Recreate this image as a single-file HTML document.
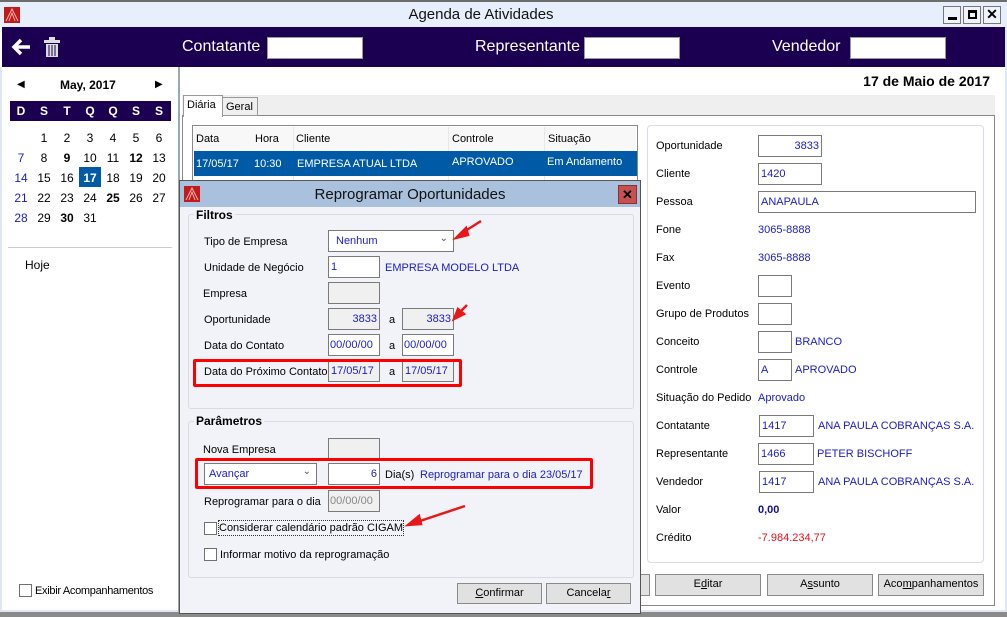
<!DOCTYPE html>
<html><head><meta charset="utf-8"><style>
*{margin:0;padding:0;box-sizing:border-box}
body{width:1007px;height:617px;overflow:hidden;background:#fff;font-family:"Liberation Sans",sans-serif;font-size:11px;color:#000;position:relative}
.a{position:absolute;white-space:nowrap}
.box{position:absolute;border:1px solid #7a7a7a;background:#fff;color:#1c1cc0;font-size:11px;padding:3px 2px;line-height:14px}
.gr{background:#f0f0f0}
.r{text-align:right}
.bl{color:#1c1cc0}
.btn{position:absolute;border:1px solid #8a8a8a;background:#e1e1e1;text-align:center;line-height:19px;font-size:11px}
.cb{position:absolute;width:13px;height:13px;border:1px solid #707070;background:#fff}
.lb{position:absolute;white-space:nowrap;line-height:14px}
</style></head><body>
<div class="a" style="left:0;top:0;width:1007px;height:2px;background:#6d6d6d"></div>
<div class="a" style="left:0;top:2px;width:1007px;height:25px;background:#e8effc"></div>
<svg class="a" style="left:4px;top:7px" width="16" height="16"><rect width="16" height="16" fill="#c21a1a"/><path d="M2 14 L8 2 L14 14 M5 14 L8 6 L11 14" stroke="#f5b0b0" stroke-width="1" fill="none"/></svg>
<div class="a" style="left:0;top:6px;width:962px;text-align:center;font-size:15px;color:#111">Agenda de Atividades</div>
<div class="a" style="left:943px;top:6px;width:18px;height:18px;border:1px solid #777;background:#eef2fb"><div class="a" style="left:4px;top:10px;width:9px;height:3px;background:#000"></div></div>
<div class="a" style="left:963px;top:6px;width:18px;height:18px;border:1px solid #777;background:#eef2fb"><div class="a" style="left:4px;top:3px;width:9px;height:9px;border:2px solid #000;border-top-width:3px"></div></div>
<div class="a" style="left:983px;top:6px;width:18px;height:18px;border:1px solid #777;background:#eef2fb;font-weight:bold;font-size:14px;text-align:center;line-height:15px">✕</div>
<div class="a" style="left:2px;top:27px;width:1003px;height:40px;background:#1b0052"></div>
<svg class="a" style="left:10px;top:37px" width="22" height="20"><path d="M11 3 L4 10 L11 17 M4 10 L20 10" stroke="#fff" stroke-width="3.5" fill="none"/></svg>
<svg class="a" style="left:43px;top:36px" width="18" height="22"><rect x="1" y="4" width="16" height="3" fill="#ddd"/><rect x="6" y="1" width="6" height="3" fill="#ddd"/><rect x="3" y="8" width="12" height="13" fill="#ddd"/><path d="M6 9V20M9 9V20M12 9V20" stroke="#1b0052" stroke-width="1"/></svg>
<div class="a" style="left:182px;top:38px;font-size:16px;color:#fff">Contatante</div>
<div class="a" style="left:267px;top:37px;width:96px;height:22px;background:#fff;border:1px solid #999"></div>
<div class="a" style="left:475px;top:38px;font-size:16px;color:#fff">Representante</div>
<div class="a" style="left:584px;top:37px;width:96px;height:22px;background:#fff;border:1px solid #999"></div>
<div class="a" style="left:772px;top:38px;font-size:16px;color:#fff">Vendedor</div>
<div class="a" style="left:850px;top:37px;width:96px;height:22px;background:#fff;border:1px solid #999"></div>
<div class="a" style="left:0;top:67px;width:2px;height:550px;background:#dfe6f4"></div>
<div class="a" style="left:1005px;top:27px;width:2px;height:590px;background:#dfe6f4"></div>
<div class="a" style="left:0;top:612px;width:1007px;height:5px;background:#8a8a8a"></div>
<div class="a" style="left:0;top:610px;width:1007px;height:2px;background:#dfe6f4"></div>

<div class="a" style="left:17px;top:79px;font-size:10px">◀</div>
<div class="a" style="left:60px;top:78px;font-weight:bold;font-size:12px">May, 2017</div>
<div class="a" style="left:155px;top:79px;font-size:10px">▶</div>
<div class="a" style="left:10px;top:101px;width:161px;height:20px;background:#1b0052"></div>
<div id="cal"></div>
<div class="a" style="left:8px;top:247px;width:164px;height:1px;background:#ccc"></div>
<div class="a" style="left:25px;top:258px;font-size:12px">Hoje</div>
<div class="a" style="left:178px;top:67px;width:2px;height:545px;background:#9aa"></div>
<div class="cb" style="left:19px;top:584px"></div>
<div class="lb" style="left:35px;top:584px;font-size:11px;letter-spacing:-0.3px">Exibir Acompanhamentos</div>

<div class="a" style="left:700px;top:73px;width:290px;text-align:right;font-weight:bold;font-size:14px">17 de Maio de 2017</div>
<div class="a" style="left:182px;top:95px;width:813px;height:20px;background:#efefef"></div>
<div class="a" style="left:182px;top:115px;width:813px;height:491px;border:1px solid #888;background:#fff"></div>
<div class="a" style="left:222px;top:97px;width:36px;height:19px;border:1px solid #999;background:#efefef;padding:3px 3px">Geral</div>
<div class="a" style="left:183px;top:95px;width:40px;height:22px;border:1px solid #999;border-bottom:none;background:#fff;padding:3px 3px">Diária</div>
<div class="a" style="left:192px;top:125px;width:446px;height:480px;border:1px solid #888;background:#fff"></div>
<div class="a" style="left:194px;top:127px;width:442px;height:24px;background:#f8f8f8"></div>
<div class="a" style="left:293px;top:127px;width:1px;height:460px;background:#e8e8e8"></div>
<div class="a" style="left:448px;top:127px;width:1px;height:460px;background:#e8e8e8"></div>
<div class="a" style="left:544px;top:127px;width:1px;height:460px;background:#e8e8e8"></div>
<div class="lb" style="left:196px;top:132px">Data</div><div class="lb" style="left:255px;top:132px">Hora</div><div class="lb" style="left:296px;top:132px">Cliente</div><div class="lb" style="left:452px;top:132px">Controle</div><div class="lb" style="left:548px;top:132px">Situação</div>
<div class="a" style="left:194px;top:151px;width:443px;height:25px;background:#005aa6"></div>
<div class="lb" style="left:196px;top:157px;color:#fff">17/05/17</div><div class="lb" style="left:254px;top:157px;color:#fff">10:30</div><div class="lb" style="left:297px;top:157px;color:#fff">EMPRESA ATUAL LTDA</div><div class="lb" style="left:452px;top:155px;color:#fff">APROVADO</div><div class="lb" style="left:547px;top:155px;color:#fff">Em Andamento</div>

<div class="a" style="left:647px;top:125px;width:337px;height:438px;border:1px solid #d8dde6;border-radius:4px"></div>
<div class="lb" style="left:656px;top:139px">Oportunidade</div><div class="box r" style="left:758px;top:135px;width:64px;height:22px">3833</div>
<div class="lb" style="left:656px;top:167px">Cliente</div><div class="box" style="left:758px;top:163px;width:64px;height:22px">1420</div>
<div class="lb" style="left:656px;top:195px">Pessoa</div><div class="box" style="left:758px;top:191px;width:218px;height:22px">ANAPAULA</div>
<div class="lb" style="left:656px;top:223px">Fone</div><div class="lb bl" style="left:758px;top:223px">3065-8888</div>
<div class="lb" style="left:656px;top:251px">Fax</div><div class="lb bl" style="left:758px;top:251px">3065-8888</div>
<div class="lb" style="left:656px;top:279px">Evento</div><div class="box" style="left:758px;top:275px;width:34px;height:22px"></div>
<div class="lb" style="left:656px;top:307px">Grupo de Produtos</div><div class="box" style="left:758px;top:303px;width:34px;height:22px"></div>
<div class="lb" style="left:656px;top:335px">Conceito</div><div class="box" style="left:758px;top:331px;width:34px;height:22px"></div><div class="lb bl" style="left:795px;top:335px">BRANCO</div>
<div class="lb" style="left:656px;top:363px">Controle</div><div class="box" style="left:758px;top:359px;width:34px;height:22px">A</div><div class="lb bl" style="left:795px;top:363px">APROVADO</div>
<div class="lb" style="left:656px;top:391px">Situação do Pedido</div><div class="lb bl" style="left:758px;top:391px">Aprovado</div>
<div class="lb" style="left:656px;top:419px">Contatante</div><div class="box" style="left:759px;top:415px;width:55px;height:22px">1417</div><div class="lb bl" style="left:818px;top:419px">ANA PAULA COBRANÇAS S.A.</div>
<div class="lb" style="left:656px;top:447px">Representante</div><div class="box" style="left:758px;top:443px;width:56px;height:22px">1466</div><div class="lb bl" style="left:817px;top:447px">PETER BISCHOFF</div>
<div class="lb" style="left:656px;top:475px">Vendedor</div><div class="box" style="left:759px;top:471px;width:55px;height:22px">1417</div><div class="lb bl" style="left:818px;top:475px">ANA PAULA COBRANÇAS S.A.</div>
<div class="lb" style="left:656px;top:503px">Valor</div><div class="lb" style="left:758px;top:503px;font-weight:bold;color:#10108a">0,00</div>
<div class="lb" style="left:656px;top:531px">Crédito</div><div class="lb" style="left:758px;top:531px;color:#e01020">-7.984.234,77</div>
<div class="btn" style="left:630px;top:574px;width:20px;height:22px"></div>
<div class="btn" style="left:655px;top:574px;width:106px;height:22px">E<u>d</u>itar</div>
<div class="btn" style="left:767px;top:574px;width:106px;height:22px">A<u>s</u>sunto</div>
<div class="btn" style="left:878px;top:574px;width:106px;height:22px">Aco<u>m</u>panhamentos</div>

<div class="a" style="left:179px;top:180px;width:462px;height:434px;border:1px solid #555;background:#f2f3f9"></div>
<div class="a" style="left:180px;top:181px;width:460px;height:26px;background:#a9c1dd"></div>
<svg class="a" style="left:184px;top:186px" width="16" height="16"><rect width="16" height="16" fill="#c21a1a"/><path d="M2 14 L8 2 L14 14 M5 14 L8 6 L11 14" stroke="#f5b0b0" stroke-width="1" fill="none"/></svg>
<div class="a" style="left:180px;top:186px;width:460px;text-align:center;font-size:15px;color:#111">Reprogramar Oportunidades</div>
<div class="a" style="left:618px;top:185px;width:19px;height:19px;background:#c75050;border:1px solid #8a3030;color:#000;font-weight:bold;text-align:center;line-height:17px;font-size:13px">✕</div>
<div class="a" style="left:188px;top:214px;width:446px;height:195px;border:1px solid #d6dbe5;border-radius:3px"></div>
<div class="lb" style="left:194px;top:208px;font-weight:bold;font-size:12px;background:#f2f3f9;padding:0 2px">Filtros</div>
<div class="lb" style="left:204px;top:235px">Tipo de Empresa</div>
<div class="box" style="left:328px;top:230px;width:126px;height:22px;padding-left:7px">Nenhum<span style="position:absolute;right:5px;top:1px;color:#555;font-size:10px">⌄</span></div>
<div class="lb" style="left:204px;top:261px">Unidade de Negócio</div><div class="box" style="left:328px;top:256px;width:52px;height:22px">1</div><div class="lb bl" style="left:385px;top:261px">EMPRESA MODELO LTDA</div>
<div class="lb" style="left:203px;top:287px">Empresa</div><div class="box gr" style="left:328px;top:282px;width:52px;height:22px"></div>
<div class="lb" style="left:204px;top:313px">Oportunidade</div><div class="box gr r" style="left:328px;top:308px;width:52px;height:22px">3833</div><div class="lb" style="left:389px;top:313px">a</div><div class="box gr r" style="left:402px;top:308px;width:52px;height:22px">3833</div>
<div class="lb" style="left:204px;top:339px">Data do Contato</div><div class="box" style="left:328px;top:334px;width:52px;height:22px;padding-left:1px">00/00/00</div><div class="lb" style="left:389px;top:339px">a</div><div class="box" style="left:402px;top:334px;width:52px;height:22px;padding-left:1px">00/00/00</div>
<div class="lb" style="left:204px;top:365px">Data do Próximo Contato</div><div class="box gr" style="left:328px;top:360px;width:52px;height:22px">17/05/17</div><div class="lb" style="left:389px;top:365px">a</div><div class="box gr" style="left:402px;top:360px;width:52px;height:22px">17/05/17</div>
<div class="a" style="left:193px;top:359px;width:269px;height:28px;border:3px solid #f00;border-radius:2px"></div>

<div class="a" style="left:188px;top:421px;width:446px;height:157px;border:1px solid #d6dbe5;border-radius:3px"></div>
<div class="lb" style="left:194px;top:414px;font-weight:bold;font-size:12px;background:#f2f3f9;padding:0 2px">Parâmetros</div>
<div class="lb" style="left:203px;top:443px">Nova Empresa</div><div class="box gr" style="left:328px;top:438px;width:52px;height:22px"></div>
<div class="box" style="left:204px;top:463px;width:113px;height:22px;padding-left:4px">Avançar<span style="position:absolute;right:5px;top:1px;color:#555;font-size:10px">⌄</span></div>
<div class="box r" style="left:328px;top:463px;width:52px;height:22px">6</div>
<div class="lb" style="left:385px;top:468px">Dia(s)</div><div class="lb bl" style="left:420px;top:468px">Reprogramar para o dia 23/05/17</div>
<div class="a" style="left:195px;top:458px;width:398px;height:31px;border:3px solid #f00;border-radius:2px"></div>
<div class="lb" style="left:204px;top:495px">Reprogramar para o dia</div><div class="box gr" style="left:328px;top:490px;width:52px;height:22px;color:#888;padding-left:1px">00/00/00</div>
<div class="cb" style="left:204px;top:522px"></div><div class="lb" style="left:219px;top:521px;outline:1px dotted #333">Considerar calendário padrão CIGAM</div>
<div class="cb" style="left:204px;top:548px"></div><div class="lb" style="left:220px;top:548px">Informar motivo da reprogramação</div>
<div class="btn" style="left:457px;top:583px;width:85px;height:21px"><u>C</u>onfirmar</div>
<div class="btn" style="left:546px;top:583px;width:85px;height:21px">Cancela<u>r</u></div>

<svg class="a" style="left:0;top:0" width="1007" height="617">
<g stroke="#e81818" stroke-width="2.5" fill="#e81818">
<line x1="481" y1="221" x2="462" y2="233"/><polygon points="456,238 466,228 468,235" />
<line x1="467" y1="305" x2="458" y2="314"/><polygon points="454,319 458,309 464,314"/>
<line x1="465" y1="506" x2="417" y2="522"/><polygon points="408,525 419,516 421,524"/>
</g></svg>
<script>
var c=document.getElementById('cal'),h='';
var xs=[21,44,67,90,113,136,159],hd=['D','S','T','Q','Q','S','S'];
for(var i=0;i<7;i++)h+='<div class="a" style="left:'+(xs[i]-10)+'px;top:104px;width:20px;text-align:center;color:#fff;font-weight:bold;font-size:12px">'+hd[i]+'</div>';
var bold={9:1,12:1,25:1,30:1};
for(var d=1;d<=31;d++){var p=d+0,col=p%7,row=Math.floor(p/7);var y=131+row*20;
var st='font-size:12px;color:'+(col==0?'#1c1cc0':'#000')+';'+(bold[d]?'font-weight:bold;':'');
if(d==17){h+='<div class="a" style="left:79px;top:'+(y-4)+'px;width:22px;height:20px;background:#005aa6"></div>';st='font-size:12px;color:#fff;font-weight:bold;';}
h+='<div class="a" style="left:'+(xs[col]-10)+'px;top:'+y+'px;width:20px;text-align:center;'+st+'">'+d+'</div>';}
c.innerHTML=h;
</script>
</body></html>
